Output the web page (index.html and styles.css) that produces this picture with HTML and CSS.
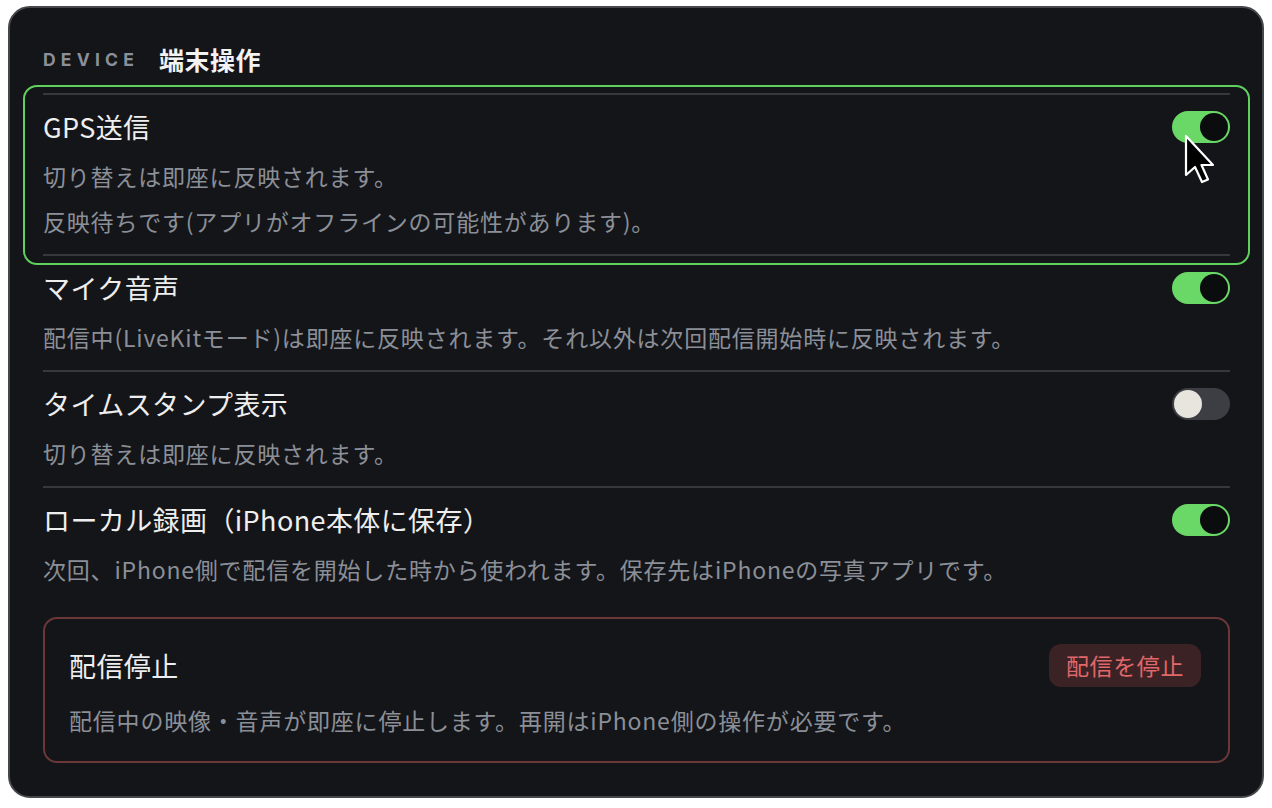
FILE: index.html
```html
<!DOCTYPE html>
<html lang="ja">
<head>
<meta charset="utf-8">
<title>端末操作</title>
<link rel="stylesheet" href="styles.css">
</head>
<body>
<div class="card">
  <div class="section-head">
    <span class="eyebrow">DEVICE</span>
    <span class="section-title">端末操作</span>
  </div>
  <div class="list">
    <div class="row row-first is-focused">
      <div class="row-main">
        <div class="row-title">GPS送信</div>
        <div class="toggle on"><span class="knob"></span></div>
      </div>
      <p class="desc">切り替えは即座に反映されます。</p>
      <p class="desc">反映待ちです(アプリがオフラインの可能性があります)。</p>
      <svg class="cursor" width="34" height="52" viewBox="0 0 34 52">
        <path d="M2 2 L2 41 L11 33 L18 48 L24 45.5 L17.5 31 L29 31 Z" fill="#000" stroke="#fff" stroke-width="2.2" stroke-linejoin="round"/>
      </svg>
    </div>
    <div class="row">
      <div class="row-main">
        <div class="row-title">マイク音声</div>
        <div class="toggle on"><span class="knob"></span></div>
      </div>
      <p class="desc">配信中(LiveKitモード)は即座に反映されます。それ以外は次回配信開始時に反映されます。</p>
    </div>
    <div class="row">
      <div class="row-main">
        <div class="row-title">タイムスタンプ表示</div>
        <div class="toggle"><span class="knob"></span></div>
      </div>
      <p class="desc">切り替えは即座に反映されます。</p>
    </div>
    <div class="row row-last">
      <div class="row-main">
        <div class="row-title">ローカル録画（iPhone本体に保存）</div>
        <div class="toggle on"><span class="knob"></span></div>
      </div>
      <p class="desc">次回、iPhone側で配信を開始した時から使われます。保存先はiPhoneの写真アプリです。</p>
    </div>
  </div>
  <div class="danger">
    <div class="danger-head">
      <div class="row-title">配信停止</div>
      <button class="danger-btn">配信を停止</button>
    </div>
    <p class="desc">配信中の映像・音声が即座に停止します。再開はiPhone側の操作が必要です。</p>
  </div>
</div>
</body>
</html>
```
FILE: styles.css
```css
* { box-sizing: border-box; }
html, body { margin: 0; padding: 0; background: #ffffff; }
body {
  font-family: "Noto Sans CJK JP", "Noto Sans", sans-serif;
  padding: 6px 8px 8px 8px;
}
.card {
  background: #141519;
  border: 2px solid #46474b;
  border-radius: 22px;
  padding: 35px 32px 33px 33px;
}
.section-head {
  display: flex;
  align-items: center;
  gap: 20px;
  height: 32px;
  margin-bottom: 18px;
}
.eyebrow {
  font-family: "Inter", "Liberation Sans", sans-serif;
  font-weight: 700;
  font-size: 17.5px;
  letter-spacing: 5.2px;
  color: #8a909a;
}
.section-title {
  font-weight: 700;
  font-size: 25px;
  color: #f2f2f2;
  letter-spacing: 0.5px;
}
.list { display: flex; flex-direction: column; }
.row {
  position: relative;
  padding: 16px 0 17px 0;
  border-bottom: 2px solid #37383c;
}
.row-first { border-top: 2px solid #37383c; }
.row-last { border-bottom: none; }
.is-focused::before {
  content: "";
  position: absolute;
  top: -10px;
  bottom: -11px;
  left: -20px;
  right: -20px;
  border: 2px solid #5fd15c;
  border-radius: 14px;
  pointer-events: none;
}
.row-main {
  display: flex;
  align-items: center;
  justify-content: space-between;
  height: 32px;
}
.row-title {
  font-size: 27px;
  line-height: 32px;
  color: #eeeeee;
  letter-spacing: 0.4px;
}
.desc {
  margin: 17px 0 0 0;
  font-size: 23px;
  line-height: 32px;
  color: #8b8f97;
  letter-spacing: 0.8px;
}
.desc + .desc { margin-top: 13px; }
.toggle {
  width: 58px;
  height: 32px;
  border-radius: 16px;
  background: #3c3e43;
  padding: 2px;
  display: flex;
  justify-content: flex-start;
}
.toggle.on {
  background: #6ad866;
  justify-content: flex-end;
}
.knob {
  width: 28px;
  height: 28px;
  border-radius: 50%;
  background: #e7e5de;
}
.toggle.on .knob { background: #0b0c0e; }
.cursor {
  position: absolute;
  left: 1141px;
  top: 39px;
}
.danger {
  margin-top: 15px;
  border: 2px solid #6b3739;
  border-radius: 14px;
  padding: 25px 27px 25px 24px;
}
.danger-head {
  display: flex;
  align-items: center;
  justify-content: space-between;
  height: 43px;
}
.danger .desc { margin-top: 17px; }
.danger-btn {
  font-family: "Noto Sans CJK JP", "Noto Sans", sans-serif;
  font-size: 23px;
  line-height: 43px;
  height: 43px;
  padding: 0 17px;
  border: none;
  border-radius: 12px;
  background: #3b2225;
  color: #e0676a;
  letter-spacing: 0.6px;
}
```
